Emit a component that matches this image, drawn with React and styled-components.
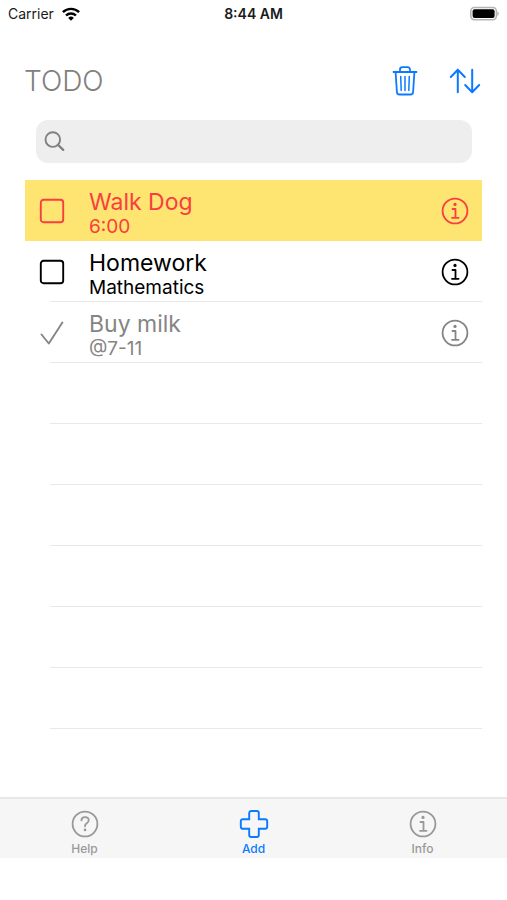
// src/App.jsx
import React, { useState } from "react";
import styled, { createGlobalStyle } from "styled-components";

const GlobalStyle = createGlobalStyle`
  * {
    box-sizing: border-box;
  }

  body {
    margin: 0;
    background: #ffffff;
    font-family: Inter, "Liberation Sans", sans-serif;
  }

  button {
    display: flex;
    align-items: center;
    justify-content: center;
    padding: 0;
    border: none;
    background: none;
    color: inherit;
    font: inherit;
    cursor: pointer;
  }
`;

const Screen = styled.div`
  display: flex;
  flex-direction: column;
  min-height: 100vh;
  padding-bottom: 42px;
`;

const StatusBar = styled.div`
  display: grid;
  grid-template-columns: 1fr auto 1fr;
  align-items: center;
  height: 28px;
  padding: 0 8px;
  font-size: 14px;
  line-height: 16px;
  color: #1a1a1a;
`;

const Carrier = styled.div`
  display: flex;
  align-items: center;
  gap: 8px;
`;

const Clock = styled.div`
  font-weight: 600;
`;

const Battery = styled.div`
  display: flex;
  justify-content: flex-end;
`;

const Header = styled.header`
  display: flex;
  align-items: center;
  justify-content: space-between;
  height: 92px;
  padding: 14px 24px 0;
`;

const Title = styled.h1`
  margin: 0;
  font-size: 28px;
  font-weight: 300;
  line-height: 36px;
  color: #808080;
`;

const Actions = styled.div`
  display: flex;
  gap: 24px;
  color: #0a7aff;
`;

const ActionButton = styled.button`
  width: 36px;
  height: 36px;
`;

const SearchBox = styled.label`
  display: flex;
  align-items: center;
  gap: 8px;
  height: 43px;
  margin: 0 35px 17px 36px;
  padding: 0 8px;
  border-radius: 12px;
  background: #eeeeee;
  color: #808080;
`;

const SearchInput = styled.input`
  flex: 1;
  min-width: 0;
  border: none;
  outline: none;
  background: transparent;
  font: inherit;
  font-size: 19px;
`;

const List = styled.ul`
  flex: 1;
  margin: 0;
  padding: 0 25px;
  list-style: none;
`;

const rowColors = {
  urgent: "#f93e42",
  open: "#000000",
  done: "#858585",
};

const Row = styled.li`
  display: grid;
  grid-template-columns: 64px 1fr 54px;
  align-items: center;
  height: 61px;
  color: ${(props) => rowColors[props.$status] || "inherit"};
  background: ${(props) =>
    props.$status === "urgent"
      ? "#fee471"
      : "linear-gradient(#e8e8e8, #e8e8e8) right bottom / calc(100% - 25px) 1px no-repeat"};
`;

const CheckCell = styled.label`
  display: grid;
  width: 54px;
  height: 60px;
  place-items: center;
  cursor: pointer;

  > * {
    grid-area: 1 / 1;
  }
`;

const CheckInput = styled.input`
  appearance: none;
  width: 26px;
  height: 26px;
  margin: 0;
`;

const CheckMark = styled.svg`
  pointer-events: none;
`;

const TaskText = styled.div`
  padding-top: 6px;
`;

const TaskTitle = styled.div`
  font-size: 23px;
  line-height: 26px;
`;

const TaskNote = styled.div`
  font-size: 19px;
  line-height: 24px;
`;

const InfoButton = styled.button`
  width: 54px;
  height: 60px;
`;

const TabBar = styled.nav`
  display: grid;
  grid-template-columns: repeat(3, 1fr);
  height: 61px;
  border-top: 2px solid #e8e8e8;
  background: #f6f6f6;
`;

const Tab = styled.button`
  && {
    flex-direction: column;
    gap: 3px;
    padding-top: 10px;
    color: ${(props) => (props.$active ? "#0a7aff" : "#999999")};
    font-size: 12px;
    font-weight: 500;
    line-height: 16px;
  }
`;

const WifiIcon = () => (
  <svg width="18" height="14" viewBox="0 0 18 14" aria-hidden="true">
    <g fill="none" stroke="#000" strokeWidth="2.4">
      <path d="M0.9 5.2a11.5 11.5 0 0 1 16.2 0" />
      <path d="M4 8.5a7.1 7.1 0 0 1 10 0" />
    </g>
    <path d="M9 13.8 6.2 10.9a4 4 0 0 1 5.6 0z" fill="#000" />
  </svg>
);

const BatteryIcon = () => (
  <svg width="29" height="16" viewBox="0 0 29 16" aria-hidden="true">
    <rect x="0.8" y="1.5" width="25.6" height="12.2" rx="3.6" fill="#fff" stroke="#b4b4b4" strokeWidth="1.6" />
    <rect x="2.6" y="3.3" width="22" height="8.6" rx="2" fill="#000" />
    <path d="M27.4 5.6V10a2.4 2.4 0 0 0 0-4.4z" fill="#b4b4b4" />
  </svg>
);

const TrashIcon = () => (
  <svg
    width="28"
    height="32"
    viewBox="0 0 28 32"
    fill="none"
    stroke="currentColor"
    strokeWidth="1.8"
    strokeLinecap="round"
    strokeLinejoin="round"
    aria-hidden="true"
  >
    <path d="M2.5 7h23" />
    <path d="M9 6.8V4.6A2.4 2.4 0 0 1 11.4 2.2h5.2A2.4 2.4 0 0 1 19 4.6v2.2" />
    <path d="M4.6 7.2 5.9 27a2.6 2.6 0 0 0 2.6 2.5h11a2.6 2.6 0 0 0 2.6-2.5l1.3-19.8" />
    <path d="m9.7 11.4.5 14M14 11.4v14m4.3-14-.5 14" strokeWidth="1.5" />
  </svg>
);

const SortIcon = () => (
  <svg
    width="32"
    height="28"
    viewBox="0 0 32 28"
    fill="none"
    stroke="currentColor"
    strokeWidth="2"
    strokeLinecap="round"
    strokeLinejoin="round"
    aria-hidden="true"
  >
    <path d="M8.8 25.2V2.8M1.8 10 8.8 2.8l7 7.2" />
    <path d="M23.2 2.8v22.4m-7-7.2 7 7.2 7-7.2" />
  </svg>
);

const SearchIcon = () => (
  <svg
    width="22"
    height="22"
    viewBox="0 0 22 22"
    fill="none"
    stroke="currentColor"
    strokeWidth="1.9"
    strokeLinecap="round"
    aria-hidden="true"
  >
    <circle cx="8.8" cy="8.6" r="7.3" />
    <path d="m14.2 14 5 4.8" strokeWidth="2.4" />
  </svg>
);

const InfoIcon = () => (
  <svg width="28" height="28" viewBox="0 0 28 28" fill="none" stroke="currentColor" aria-hidden="true">
    <circle cx="14" cy="14" r="12.4" strokeWidth="1.8" />
    <circle cx="14" cy="7.4" r="1.6" fill="currentColor" stroke="none" />
    <path d="M11.5 12h3v8.6M11 20.8h6.6" strokeWidth="1.8" strokeLinecap="round" strokeLinejoin="round" />
  </svg>
);

const HelpIcon = () => (
  <svg width="28" height="28" viewBox="0 0 28 28" fill="none" stroke="currentColor" aria-hidden="true">
    <circle cx="14" cy="14" r="12.4" strokeWidth="1.8" />
    <path
      d="M10.4 10.4c.1-2.1 1.5-3.2 3.6-3.2s3.7 1.2 3.7 3.1c0 1.5-.8 2.2-1.9 2.9-1.3.8-1.8 1.4-1.8 2.7v.4"
      strokeWidth="1.8"
      strokeLinecap="round"
    />
    <circle cx="14" cy="19.9" r="1.3" fill="currentColor" stroke="none" />
  </svg>
);

const AddIcon = () => (
  <svg
    width="30"
    height="28"
    viewBox="0 0 30 28"
    fill="none"
    stroke="currentColor"
    strokeWidth="1.9"
    aria-hidden="true"
  >
    <path d="M12.2 1h5.6a2 2 0 0 1 2 2v6.2h6.4a2 2 0 0 1 2 2v5.6a2 2 0 0 1-2 2h-6.4V25a2 2 0 0 1-2 2h-5.6a2 2 0 0 1-2-2v-6.2H3.8a2 2 0 0 1-2-2v-5.6a2 2 0 0 1 2-2h6.4V3a2 2 0 0 1 2-2z" />
  </svg>
);

const initialTasks = [
  { id: 1, title: "Walk Dog", note: "6:00", urgent: true, done: false },
  { id: 2, title: "Homework", note: "Mathematics", urgent: false, done: false },
  { id: 3, title: "Buy milk", note: "@7-11", urgent: false, done: true },
];

const tabs = [
  { name: "Help", Icon: HelpIcon },
  { name: "Add", Icon: AddIcon },
  { name: "Info", Icon: InfoIcon },
];

const EMPTY_ROWS = 6;

const getStatus = (task) => {
  if (task.done) return "done";
  return task.urgent ? "urgent" : "open";
};

const TaskRow = ({ task, onToggle }) => (
  <Row $status={getStatus(task)}>
    <CheckCell>
      <CheckInput
        type="checkbox"
        checked={task.done}
        onChange={() => onToggle(task.id)}
        aria-label={task.title}
      />
      <CheckMark width="26" height="26" viewBox="0 0 26 26" fill="none" stroke="currentColor" strokeWidth="1.9">
        {task.done ? (
          <path d="m2.5 14.5 7.3 9L23.4 2.5" strokeLinecap="round" strokeLinejoin="round" />
        ) : (
          <rect x="1.8" y="1.8" width="22.4" height="22.4" rx="2.8" />
        )}
      </CheckMark>
    </CheckCell>
    <TaskText>
      <TaskTitle>{task.title}</TaskTitle>
      <TaskNote>{task.note}</TaskNote>
    </TaskText>
    <InfoButton type="button" aria-label={`Details of ${task.title}`}>
      <InfoIcon />
    </InfoButton>
  </Row>
);

const App = () => {
  const [tasks, setTasks] = useState(initialTasks);
  const [query, setQuery] = useState("");
  const [activeTab, setActiveTab] = useState("Add");

  const handleToggle = (id) => {
    setTasks(tasks.map((t) => (t.id === id ? { ...t, done: !t.done } : t)));
  };

  const visible = tasks.filter((t) =>
    t.title.toLowerCase().includes(query.toLowerCase())
  );

  return (
    <Screen>
      <GlobalStyle />

      <StatusBar>
        <Carrier>
          Carrier
          <WifiIcon />
        </Carrier>
        <Clock>8:44 AM</Clock>
        <Battery>
          <BatteryIcon />
        </Battery>
      </StatusBar>

      <Header>
        <Title>TODO</Title>
        <Actions>
          <ActionButton type="button" aria-label="Delete">
            <TrashIcon />
          </ActionButton>
          <ActionButton type="button" aria-label="Sort">
            <SortIcon />
          </ActionButton>
        </Actions>
      </Header>

      <SearchBox>
        <SearchIcon />
        <SearchInput
          type="search"
          aria-label="Search"
          value={query}
          onChange={(e) => setQuery(e.target.value)}
        />
      </SearchBox>

      <List>
        {visible.map((task) => (
          <TaskRow key={task.id} task={task} onToggle={handleToggle} />
        ))}
        {Array.from({ length: EMPTY_ROWS }, (_, i) => (
          <Row key={`empty-${i}`} aria-hidden="true" />
        ))}
      </List>

      <TabBar>
        {tabs.map(({ name, Icon }) => (
          <Tab
            key={name}
            type="button"
            $active={name === activeTab}
            onClick={() => setActiveTab(name)}
          >
            <Icon />
            {name}
          </Tab>
        ))}
      </TabBar>
    </Screen>
  );
};

export default App;
